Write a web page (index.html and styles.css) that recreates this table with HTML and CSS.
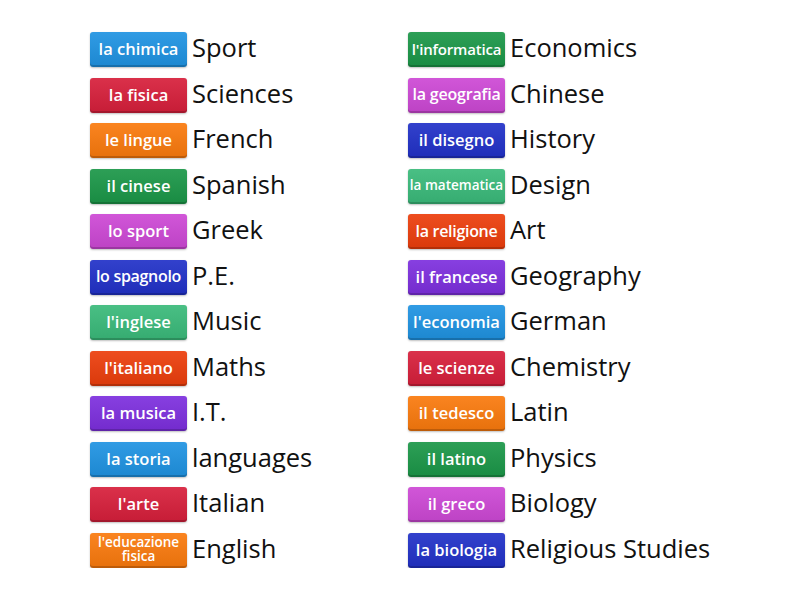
FILE: index.html
```html
<!DOCTYPE html>
<html lang="en">
<head>
  <meta charset="UTF-8" />
  <title>Match up</title>
  <link rel="stylesheet" href="styles.css">
</head>
<body>
  <div class="board">
    <div class="col">
      <div class="row"><span class="tile c-blue">la chimica</span><span class="word">Sport</span></div>
      <div class="row"><span class="tile c-red">la fisica</span><span class="word">Sciences</span></div>
      <div class="row"><span class="tile c-orange">le lingue</span><span class="word">French</span></div>
      <div class="row"><span class="tile c-green">il cinese</span><span class="word">Spanish</span></div>
      <div class="row"><span class="tile c-pink">lo sport</span><span class="word">Greek</span></div>
      <div class="row"><span class="tile c-navy tight">lo spagnolo</span><span class="word">P.E.</span></div>
      <div class="row"><span class="tile c-teal">l'inglese</span><span class="word">Music</span></div>
      <div class="row"><span class="tile c-rust">l'italiano</span><span class="word">Maths</span></div>
      <div class="row"><span class="tile c-purple">la musica</span><span class="word">I.T.</span></div>
      <div class="row"><span class="tile c-blue">la storia</span><span class="word">languages</span></div>
      <div class="row"><span class="tile c-red">l'arte</span><span class="word">Italian</span></div>
      <div class="row"><span class="tile c-orange two">l'educazione fisica</span><span class="word">English</span></div>
    </div>
    <div class="col">
      <div class="row"><span class="tile c-green small">l'informatica</span><span class="word">Economics</span></div>
      <div class="row"><span class="tile c-pink mid">la geografia</span><span class="word">Chinese</span></div>
      <div class="row"><span class="tile c-navy">il disegno</span><span class="word">History</span></div>
      <div class="row"><span class="tile c-teal tiny">la matematica</span><span class="word">Design</span></div>
      <div class="row"><span class="tile c-rust tight">la religione</span><span class="word">Art</span></div>
      <div class="row"><span class="tile c-purple">il francese</span><span class="word">Geography</span></div>
      <div class="row"><span class="tile c-blue">l'economia</span><span class="word">German</span></div>
      <div class="row"><span class="tile c-red">le scienze</span><span class="word">Chemistry</span></div>
      <div class="row"><span class="tile c-orange">il tedesco</span><span class="word">Latin</span></div>
      <div class="row"><span class="tile c-green">il latino</span><span class="word">Physics</span></div>
      <div class="row"><span class="tile c-pink">il greco</span><span class="word">Biology</span></div>
      <div class="row"><span class="tile c-navy">la biologia</span><span class="word">Religious Studies</span></div>
    </div>
  </div>
</body>
</html>
```

FILE: styles.css
```css
body {
  margin: 0;
  background: #ffffff;
  font-family: "Open Sans", "Noto Sans", sans-serif;
  color: #111;
}

.board {
  display: flex;
  padding: 32px 0 0 90px;
}

.col {
  width: 318px;
  display: flex;
  flex-direction: column;
  gap: 10.5px;
}

.row {
  display: flex;
  align-items: center;
  gap: 5px;
  height: 35px;
}

.tile {
  box-sizing: border-box;
  width: 97px;
  height: 35px;
  padding-bottom: 2px;
  flex: none;
  display: flex;
  align-items: center;
  justify-content: center;
  text-align: center;
  border-radius: 3px;
  color: #fff;
  font-size: 16.5px;
  font-weight: 600;
  white-space: nowrap;
  background-image: linear-gradient(rgba(255,255,255,0.08), rgba(0,0,0,0.08));
  box-shadow: inset 0 -2px 0 rgba(0,0,0,0.18), 0 1px 2px rgba(0,0,0,0.25);
}

.tile.tight { font-size: 16px; letter-spacing: -0.3px; }
.tile.mid { font-size: 16px; letter-spacing: -0.2px; }
.tile.small { font-size: 15px; letter-spacing: -0.2px; }
.tile.tiny { font-size: 13.5px; }
.tile.two { white-space: normal; line-height: 14px; font-size: 13.5px; }

.word {
  font-size: 25.5px;
  line-height: 35px;
  margin-top: -4px;
}

.c-blue { background-color: #1f93e2; }
.c-red { background-color: #d71f3b; }
.c-orange { background-color: #fa7a0d; }
.c-green { background-color: #1b9748; }
.c-pink { background-color: #cd48d5; }
.c-navy { background-color: #2131c8; }
.c-teal { background-color: #3aba7a; }
.c-rust { background-color: #ec3e0c; }
.c-purple { background-color: #7d2fde; }
```
